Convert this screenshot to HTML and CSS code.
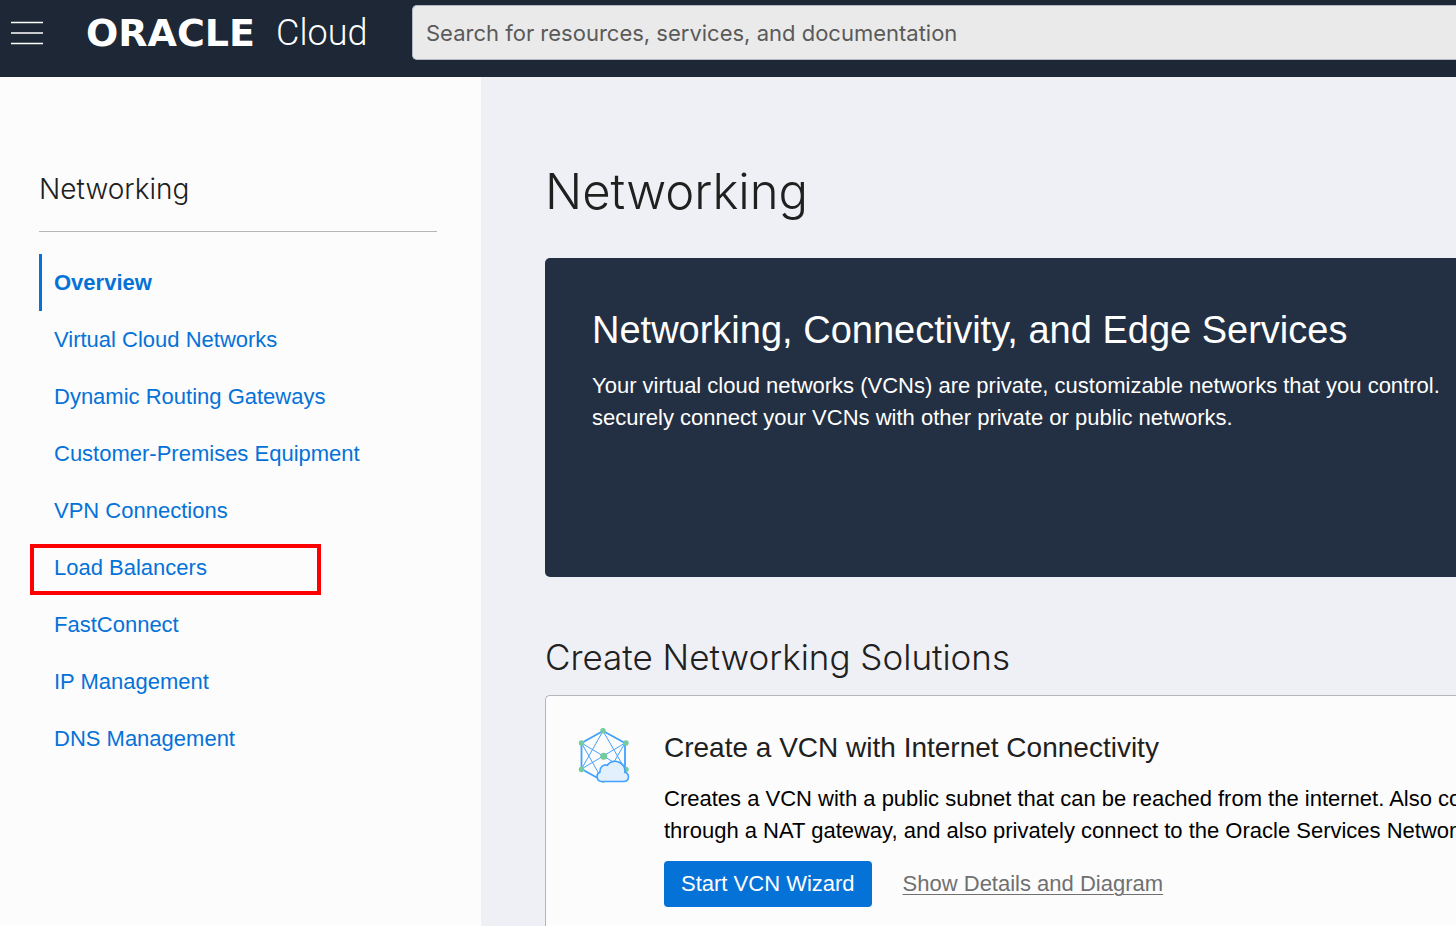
FILE: index.html
```html
<!DOCTYPE html>
<html lang="en">
<head>
<meta charset="utf-8">
<meta name="viewport" content="width=device-width, initial-scale=1">
<title>Networking</title>
<link rel="stylesheet" href="styles.css">
</head>
<body>
<header class="topbar">
  <button class="menu-button" type="button" aria-label="Menu">
    <svg width="32" height="24" viewBox="0 0 32 24" aria-hidden="true"><path d="M0 1.5h32M0 12h32M0 22.5h32" stroke="#fff" stroke-width="1.5"/></svg>
  </button>
  <a class="brand" href="#"><span class="brand-name">ORACLE</span><span class="brand-product">Cloud</span></a>
  <input class="search" type="search" aria-label="Search" placeholder="Search for resources, services, and documentation">
</header>
<div class="layout">
  <aside class="sidebar">
    <h2 class="sidebar-title">Networking</h2>
    <nav aria-label="Networking">
      <ul class="nav-list">
        <li class="nav-item active"><a href="#" aria-current="page">Overview</a></li>
        <li class="nav-item"><a href="#">Virtual Cloud Networks</a></li>
        <li class="nav-item"><a href="#">Dynamic Routing Gateways</a></li>
        <li class="nav-item"><a href="#">Customer-Premises Equipment</a></li>
        <li class="nav-item"><a href="#">VPN Connections</a></li>
        <li class="nav-item highlighted"><a href="#">Load Balancers</a></li>
        <li class="nav-item"><a href="#">FastConnect</a></li>
        <li class="nav-item"><a href="#">IP Management</a></li>
        <li class="nav-item"><a href="#">DNS Management</a></li>
      </ul>
    </nav>
  </aside>
  <main class="content">
    <h1 class="page-title">Networking</h1>
    <section class="hero">
      <h2 class="hero-title">Networking, Connectivity, and Edge Services</h2>
      <p class="hero-text">Your virtual cloud networks (VCNs) are private, customizable networks that you control.<br>securely connect your VCNs with other private or public networks.</p>
    </section>
    <h2 class="section-title">Create Networking Solutions</h2>
    <section class="card">
      <svg class="card-icon" width="54" height="58" viewBox="0 0 54 58" aria-hidden="true">
        <g fill="none" stroke="#42a1ff">
          <path d="M25 3 3.500 15v26L25 53l22-12V15z" stroke-width="1.8"/>
          <path d="M25 3 3.500 41M25 3l22 38M3.500 15 25 53M47 15 25 53M3.500 15 47 41M47 15 3.500 41" stroke-width="1"/>
        </g>
        <g fill="#74cb9b"><circle cx="25" cy="2.700" r="2.700"/><circle cx="3.500" cy="15" r="2.700"/><circle cx="48" cy="15" r="2.700"/><circle cx="3.500" cy="41.500" r="2.700"/><circle cx="48" cy="41.500" r="2.700"/><circle cx="25" cy="52" r="2.700"/><circle cx="25.700" cy="28.300" r="3.500"/></g>
        <path d="M23.500 53.500a5 5 0 0 1-1.500-9.500c-.5-5 3.500-8 7.500-6.800 2.500-4.500 9-5 13-2.200 3.500 2.300 4.800 6 4.300 9.200 5.500 1.800 4.500 9.300-1.300 9.300z" fill="#e2effd" stroke="#42a1ff" stroke-width="1.600"/>
      </svg>
      <div class="card-body">
        <h3 class="card-title">Create a VCN with Internet Connectivity</h3>
        <p class="card-text">Creates a VCN with a public subnet that can be reached from the internet. Also configures<br>through a NAT gateway, and also privately connect to the Oracle Services Network.</p>
        <div class="actions">
          <button class="primary" type="button">Start VCN Wizard</button>
          <a class="details" href="#">Show Details and Diagram</a>
        </div>
      </div>
    </section>
  </main>
</div>
</body>
</html>
```

FILE: styles.css
```css
*, *::after { box-sizing: border-box; }
body {
  margin: 0;
  min-height: 100vh;
  display: flex;
  flex-direction: column;
  overflow: hidden;
  background: #eff0f5;
  color: #202020;
  font-family: "Liberation Sans", Arial, sans-serif;
  font-size: 22px;
}
h1, h2, h3, p, ul { margin: 0; padding: 0; }
h1, h2, h3 { font-weight: 400; }

.topbar {
  display: flex;
  align-items: flex-start;
  height: 77px;
  padding: 5px 0 0 11px;
  background: #1d2735;
}
.menu-button {
  display: flex;
  align-items: center;
  height: 56px;
  padding: 0;
  border: 0;
  background: none;
}
.brand {
  display: flex;
  align-items: center;
  flex: none;
  width: 325px;
  height: 56px;
  padding-left: 43px;
  gap: 10px;
  color: #fff;
  text-decoration: none;
}
.brand-name { min-width: 180px; font: 700 38px/56px "DejaVu Sans", sans-serif; }
.brand-product { font: 300 36px/56px Roboto, sans-serif; }
.search {
  flex: 1;
  min-width: 0;
  height: 55px;
  margin-left: 44px;
  padding: 0 13px;
  border: 1px solid #b3b7c3;
  border-right: 0;
  border-radius: 5px 0 0 5px;
  background: #eaeaea;
  font: 400 22px Inter, sans-serif;
}
.search::placeholder { color: #5a5a5a; opacity: 1; }

.layout { display: flex; flex: 1; }
.sidebar {
  flex: none;
  width: 481px;
  padding: 88px 44px 40px 39px;
  background: #fcfcfc;
}
.sidebar-title {
  padding-bottom: 18px;
  border-bottom: 1px solid #b4b6ba;
  font: 300 28px/48px Inter, sans-serif;
}
.nav-list { margin-top: 22px; list-style: none; }
.nav-item { position: relative; }
.nav-item a {
  display: block;
  padding-left: 12px;
  border-left: 3px solid transparent;
  color: #0572d8;
  line-height: 57px;
  text-decoration: none;
}
.nav-item.active a { border-color: #0572d8; font-weight: 700; }
.highlighted::after {
  content: "";
  position: absolute;
  top: 5px;
  left: -9px;
  width: 291px;
  height: 51px;
  border: 4px solid #f00;
  pointer-events: none;
}

.content { flex: 1; min-width: 0; padding: 83px 0 0 64px; }
.page-title { font: 300 49px/64px Inter, sans-serif; }
.hero {
  min-height: 319px;
  margin-top: 34px;
  padding: 48px 0 48px 47px;
  border-radius: 5px 0 0 5px;
  background: #233043;
  color: #fff;
  white-space: nowrap;
}
.hero-title { font-size: 38px; line-height: 48px; }
.hero-text { margin-top: 16px; line-height: 32px; }
.section-title { margin-top: 56px; font: 300 35px/48px Inter, sans-serif; }
.card {
  display: flex;
  gap: 32px;
  min-height: 280px;
  margin-top: 14px;
  padding: 32px 0 32px 32px;
  border: 1px solid #b4b6ba;
  border-right: 0;
  border-radius: 5px 0 0 5px;
  background: #fcfcfc;
  white-space: nowrap;
}
.card-icon { flex: none; }
.card-title { font-size: 28px; line-height: 40px; }
.card-text { margin-top: 15px; color: #000; line-height: 32px; }
.actions { display: flex; align-items: center; gap: 31px; margin-top: 14px; }
.primary {
  height: 46px;
  padding: 0 17px;
  border: 0;
  border-radius: 4px;
  background: #0572d8;
  color: #fff;
  font: inherit;
}
.details { color: #707070; text-decoration-thickness: 1px; text-underline-offset: 3px; }
```
